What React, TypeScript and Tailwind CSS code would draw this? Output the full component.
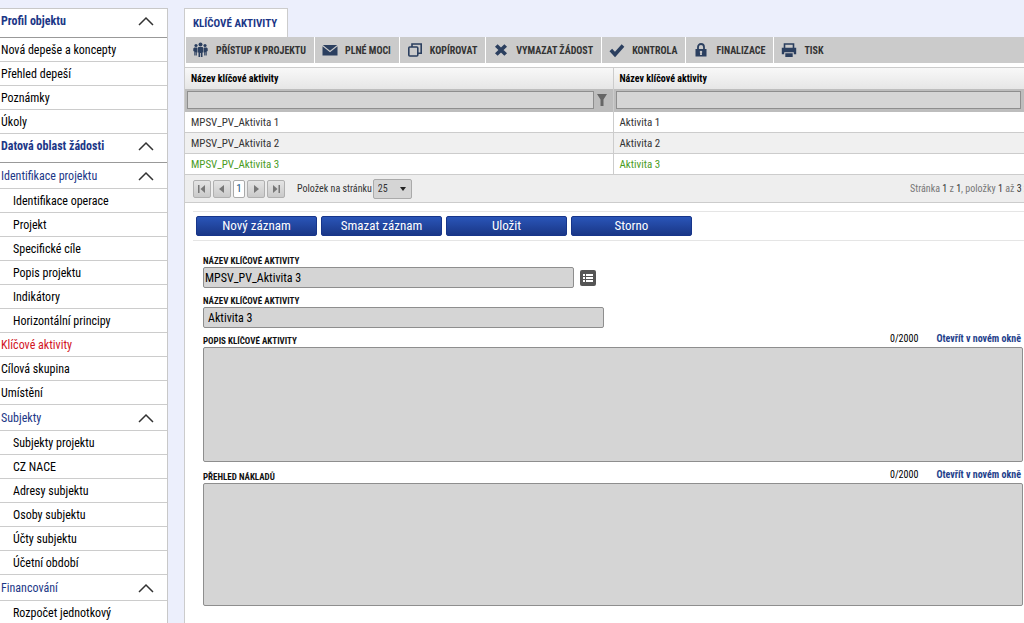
import type { ReactNode } from 'react';

type MenuItem = { label: string; kind: 'section' | 'group' | 'item' | 'sub'; active?: boolean };

const menu: MenuItem[] = [
  { label: 'Profil objektu', kind: 'section' },
  { label: 'Nová depeše a koncepty', kind: 'item' },
  { label: 'Přehled depeší', kind: 'item' },
  { label: 'Poznámky', kind: 'item' },
  { label: 'Úkoly', kind: 'item' },
  { label: 'Datová oblast žádosti', kind: 'section' },
  { label: 'Identifikace projektu', kind: 'group' },
  { label: 'Identifikace operace', kind: 'sub' },
  { label: 'Projekt', kind: 'sub' },
  { label: 'Specifické cíle', kind: 'sub' },
  { label: 'Popis projektu', kind: 'sub' },
  { label: 'Indikátory', kind: 'sub' },
  { label: 'Horizontální principy', kind: 'sub' },
  { label: 'Klíčové aktivity', kind: 'item', active: true },
  { label: 'Cílová skupina', kind: 'item' },
  { label: 'Umístění', kind: 'item' },
  { label: 'Subjekty', kind: 'group' },
  { label: 'Subjekty projektu', kind: 'sub' },
  { label: 'CZ NACE', kind: 'sub' },
  { label: 'Adresy subjektu', kind: 'sub' },
  { label: 'Osoby subjektu', kind: 'sub' },
  { label: 'Účty subjektu', kind: 'sub' },
  { label: 'Účetní období', kind: 'sub' },
  { label: 'Financování', kind: 'group' },
  { label: 'Rozpočet jednotkový', kind: 'sub' },
];

const tools: { label: string; icon: ReactNode }[] = [
  {
    label: 'Přístup k projektu',
    icon: (
      <g fill="currentColor">
        <circle cx="7.500" cy="2.400" r="2" />
        <circle cx="3" cy="3.500" r="1.600" />
        <circle cx="12" cy="3.500" r="1.600" />
        <path d="M5.500 5h4l1 1v4.500h-1V15H7.900v-4h-.8v4H5.500v-4.500h-1V6z" />
        <path d="M1.300 5.600H4v8H3.200v-3.400h-.6v3.400H1.300V9.600L.3 8.900V6.500zM13.700 5.600H11v8h.8v-3.400h.6v3.400h1.300V9.600l1-.7V6.500z" />
      </g>
    ),
  },
  {
    label: 'Plné moci',
    icon: <path fill="currentColor" d="M.8 3h14.400L8 8.700zM.5 4.300 8 10.200l7.500-5.900v9.200H.5z" />,
  },
  {
    label: 'Kopírovat',
    icon: (
      <g fill="none" stroke="currentColor" strokeWidth="1.600">
        <rect x="1.800" y="5" width="9" height="9" rx="1" />
        <path d="M5 5V2h9.200v9.200H11" />
      </g>
    ),
  },
  {
    label: 'Vymazat žádost',
    icon: <path stroke="currentColor" strokeWidth="3.800" d="m3.300 3.500 9.400 9m0-9-9.400 9" />,
  },
  {
    label: 'Kontrola',
    icon: <path fill="none" stroke="currentColor" strokeWidth="3.600" d="m1.800 8 4.200 4.500L14 3.500" />,
  },
  {
    label: 'Finalizace',
    icon: (
      <g fill="currentColor">
        <path fillRule="evenodd" d="M2.500 7h11v7.500h-11zM8 8.700a1.300 1.300 0 0 0-.8 2.300L7 13h2l-.2-2A1.300 1.300 0 0 0 8 8.700z" />
        <path fill="none" stroke="currentColor" strokeWidth="1.800" d="M5 7.500V5a3 3 0 0 1 6 0v2.500" />
      </g>
    ),
  },
  {
    label: 'Tisk',
    icon: (
      <g>
        <path fill="none" stroke="currentColor" strokeWidth="1.600" d="M3.500 6.500V2h9v4.500" />
        <path fill="currentColor" d="M.8 5.800h14.400v6.500h-2.400v-2H3.200v2H.8zM4.300 11.300h7.400V15H4.300z" />
      </g>
    ),
  },
];

const rows = [
  { name: 'MPSV_PV_Aktivita 1', activity: 'Aktivita 1' },
  { name: 'MPSV_PV_Aktivita 2', activity: 'Aktivita 2' },
  { name: 'MPSV_PV_Aktivita 3', activity: 'Aktivita 3', selected: true },
];

const menuStyles = {
  section: 'h-[29px] border-[#999] pr-[13px] pb-1 pl-px font-bold text-[#1c3787]',
  group: 'h-[26px] border-[#ccc] pr-[13px] pl-px text-[#1c3787]',
  item: 'h-6 border-[#ccc] pl-px',
  sub: 'h-6 border-[#ccc] pl-[13px]',
};

function Chevron() {
  return (
    <svg className="h-4 w-4" viewBox="0 0 16 16" fill="none" stroke="#333" strokeWidth="1.500">
      <path d="m1 12 7-7 7 7" />
    </svg>
  );
}

function Sidebar() {
  return (
    <nav className="w-[168px] shrink-0 border-t border-r border-[#c8c8c8] bg-white text-[12px]">
      {menu.map(({ label, kind, active }) =>
        kind === 'section' || kind === 'group' ? (
          <button key={label} className={`flex w-full items-center justify-between border-b text-left ${menuStyles[kind]}`}>
            {label}
            <Chevron />
          </button>
        ) : (
          <a key={label} href="#" className={`flex items-center border-b ${menuStyles[kind]} ${active ? 'text-[#d2141e]' : ''}`}>
            {label}
          </a>
        ),
      )}
    </nav>
  );
}

function Toolbar() {
  return (
    <div className="ml-px flex h-[26px] bg-[#cbcbcb] text-[10px] font-bold text-[#333]">
      {tools.map(({ label, icon }) => (
        <button key={label} className="flex items-center gap-[7px] border-r border-white pr-2 pl-[7px] whitespace-nowrap uppercase last:border-r-0">
          <svg className="h-4 w-4 text-[#2b3f5f]" viewBox="0 0 16 16">
            {icon}
          </svg>
          {label}
        </button>
      ))}
    </div>
  );
}

function FilterField({ label, icon }: { label: string; icon?: boolean }) {
  return (
    <div className={`flex h-[23px] items-center gap-0.5 pl-0.5 ${icon ? 'pr-[5px]' : 'pr-[3px]'}`}>
      <input aria-label={label} className="h-[18px] min-w-0 flex-1 border border-[#8e8e8e] bg-[#d5d5d5] px-1 text-[12px]" />
      {icon && (
        <button aria-label="Filtr" className="w-3">
          <svg className="h-3 w-3" viewBox="0 0 12 12" fill="#666">
            <path d="M1 0h10L7.500 5.500V12h-3V5.500z" />
          </svg>
        </button>
      )}
    </div>
  );
}

function Grid() {
  return (
    <table className="mt-1 w-full table-fixed border-collapse border-t border-[#ccc] text-left text-[11px]">
      <thead>
        <tr className="h-[21px] bg-linear-to-b from-[#f8f8f8] to-[#e6e6e6] text-[10px]">
          <th className="w-[428px] border-r border-[#ccc] px-1.5 font-bold">Název klíčové aktivity</th>
          <th className="px-1.5 font-bold">Název klíčové aktivity</th>
        </tr>
        <tr className="bg-[#bdbdbd]">
          <td className="border-r border-[#ccc]">
            <FilterField label="Filtr kód aktivity" icon />
          </td>
          <td>
            <FilterField label="Filtr název aktivity" />
          </td>
        </tr>
      </thead>
      <tbody className="text-[#333]">
        {rows.map((row) => (
          <tr key={row.name} className={`h-[21px] border-b border-[#ccc] even:bg-[#f0f0f0] ${row.selected ? 'text-[#4a9c1e]' : ''}`}>
            <td className="border-r border-[#ccc] px-1.5 pt-0.5">{row.name}</td>
            <td className="px-1.5 pt-0.5">{row.activity}</td>
          </tr>
        ))}
      </tbody>
    </table>
  );
}

function PagerButton({ label, path }: { label: string; path: string }) {
  return (
    <button aria-label={label} className="flex h-[18px] w-[18px] items-center justify-center rounded-[2px] border border-[#b0b0b0] bg-linear-to-b from-[#e4e4e4] to-[#cacaca]">
      <svg className="h-2 w-2" viewBox="0 0 8 8" fill="#777">
        <path d={path} />
      </svg>
    </button>
  );
}

function Pager() {
  return (
    <div className="flex h-[28px] items-center border-b border-[#ccc] bg-[#eee] pl-2 text-[10px] text-[#333]">
      <div className="flex items-center gap-0.5">
        <PagerButton label="První" path="M0 0h1.500v8H0zM7 0v8L2.500 4z" />
        <PagerButton label="Předchozí" path="M6 0v8L1 4z" />
        <button className="h-[18px] w-3 rounded-[2px] border border-[#aaa] bg-white text-[11px] leading-4 text-[#1a5a80]">1</button>
        <PagerButton label="Další" path="M2 0v8l5-4z" />
        <PagerButton label="Poslední" path="M1 0v8l4.500-4zM6.500 0H8v8H6.500z" />
      </div>
      <label htmlFor="page-size" className="mr-px ml-3 whitespace-nowrap">
        Položek na stránku
      </label>
      <div className="grid items-center">
        <select id="page-size" className="col-start-1 row-start-1 h-5 w-[39px] appearance-none rounded-[2px] border border-[#aaa] bg-[#d5d5d5] pl-1">
          <option>25</option>
        </select>
        <svg className="pointer-events-none col-start-1 row-start-1 mr-1.5 h-1 w-1.5 justify-self-end" viewBox="0 0 6 4" fill="#222">
          <path d="M0 0h6L3 4z" />
        </svg>
      </div>
      <p className="ml-auto w-[114px] shrink-0 overflow-hidden whitespace-nowrap text-[#777]">
        Stránka <span className="text-[#333]">1</span> z <span className="text-[#333]">1</span>, položky{' '}
        <span className="text-[#333]">1</span> až <span className="text-[#333]">3</span> z
      </p>
    </div>
  );
}

function TextArea({ id, label, size }: { id: string; label: string; size: string }) {
  return (
    <>
      <div className="flex h-[19px] items-end text-[10px] leading-4">
        <label htmlFor={id} className="text-[9px] leading-[11px] font-bold text-[#111] uppercase">
          {label}
        </label>
        <span className="mr-[18px] ml-auto">0/2000</span>
        <a href="#" className="mr-0.5 font-bold text-[#1f3f8c]">
          Otevřít v novém okně
        </a>
      </div>
      <textarea id={id} className={`block w-full resize-none rounded-[2px] border border-[#8e8e8e] bg-[#d5d5d5] p-1 text-[12px] ${size}`} />
    </>
  );
}

function DetailForm() {
  return (
    <form className="mt-[15px] pr-px pl-[18px] text-[12px]">
      <label htmlFor="code" className="block text-[9px] leading-[11px] font-bold text-[#111] uppercase">
        Název klíčové aktivity
      </label>
      <div className="flex items-center gap-1.5">
        <input id="code" defaultValue="MPSV_PV_Aktivita 3" className="h-[21px] w-[371px] rounded-[2px] border border-[#8e8e8e] bg-[#d5d5d5] px-px" />
        <button type="button" aria-label="Vybrat aktivitu" className="flex h-4 w-4 items-center justify-center rounded-[2px] bg-[#555]">
          <svg className="h-2.5 w-2.5" viewBox="0 0 10 10" fill="#fff">
            <path d="M0 1h2v2H0zM3 1h7v2H3zM0 4h2v2H0zM3 4h7v2H3zM0 7h2v2H0zM3 7h7v2H3z" />
          </svg>
        </button>
      </div>
      <label htmlFor="activity" className="mt-2 block text-[9px] leading-[11px] font-bold text-[#111] uppercase">
        Název klíčové aktivity
      </label>
      <input id="activity" defaultValue="Aktivita 3" className="block h-[21px] w-[401px] rounded-[2px] border border-[#8e8e8e] bg-[#d5d5d5] px-1" />
      <TextArea id="description" label="Popis klíčové aktivity" size="mb-0.5 h-[115px]" />
      <TextArea id="costs" label="Přehled nákladů" size="h-[123px]" />
    </form>
  );
}

export default function App() {
  return (
    <div className="flex min-h-screen gap-4 overflow-hidden bg-[#eceffc] pt-2 font-['Roboto_Condensed','Liberation_Sans_Narrow',Roboto,sans-serif] text-black">
      <Sidebar />
      <main className="flex min-w-0 flex-1 flex-col">
        <div className="flex">
          <a href="#" className="flex h-[29px] items-center border-t border-r border-l border-[#ccc] bg-white pr-2.5 pl-2 pt-0.5 text-[11px] font-bold text-[#1c3787] uppercase">
            Klíčové aktivity
          </a>
        </div>
        <div className="flex-1 border-l border-[#ccc] bg-white">
          <Toolbar />
          <Grid />
          <Pager />
          <div className="mt-2 ml-2 flex gap-1 border-y border-[#e5e5e5] px-[3px] py-1">
            {['Nový záznam', 'Smazat záznam', 'Uložit', 'Storno'].map((label) => (
              <button
                key={label}
                className="h-5 w-[121px] rounded-[2px] border border-[#17358a] bg-linear-to-b from-[#2a55b8] to-[#1a3787] text-[13px] leading-4 text-white"
              >
                {label}
              </button>
            ))}
          </div>
          <DetailForm />
        </div>
      </main>
    </div>
  );
}
